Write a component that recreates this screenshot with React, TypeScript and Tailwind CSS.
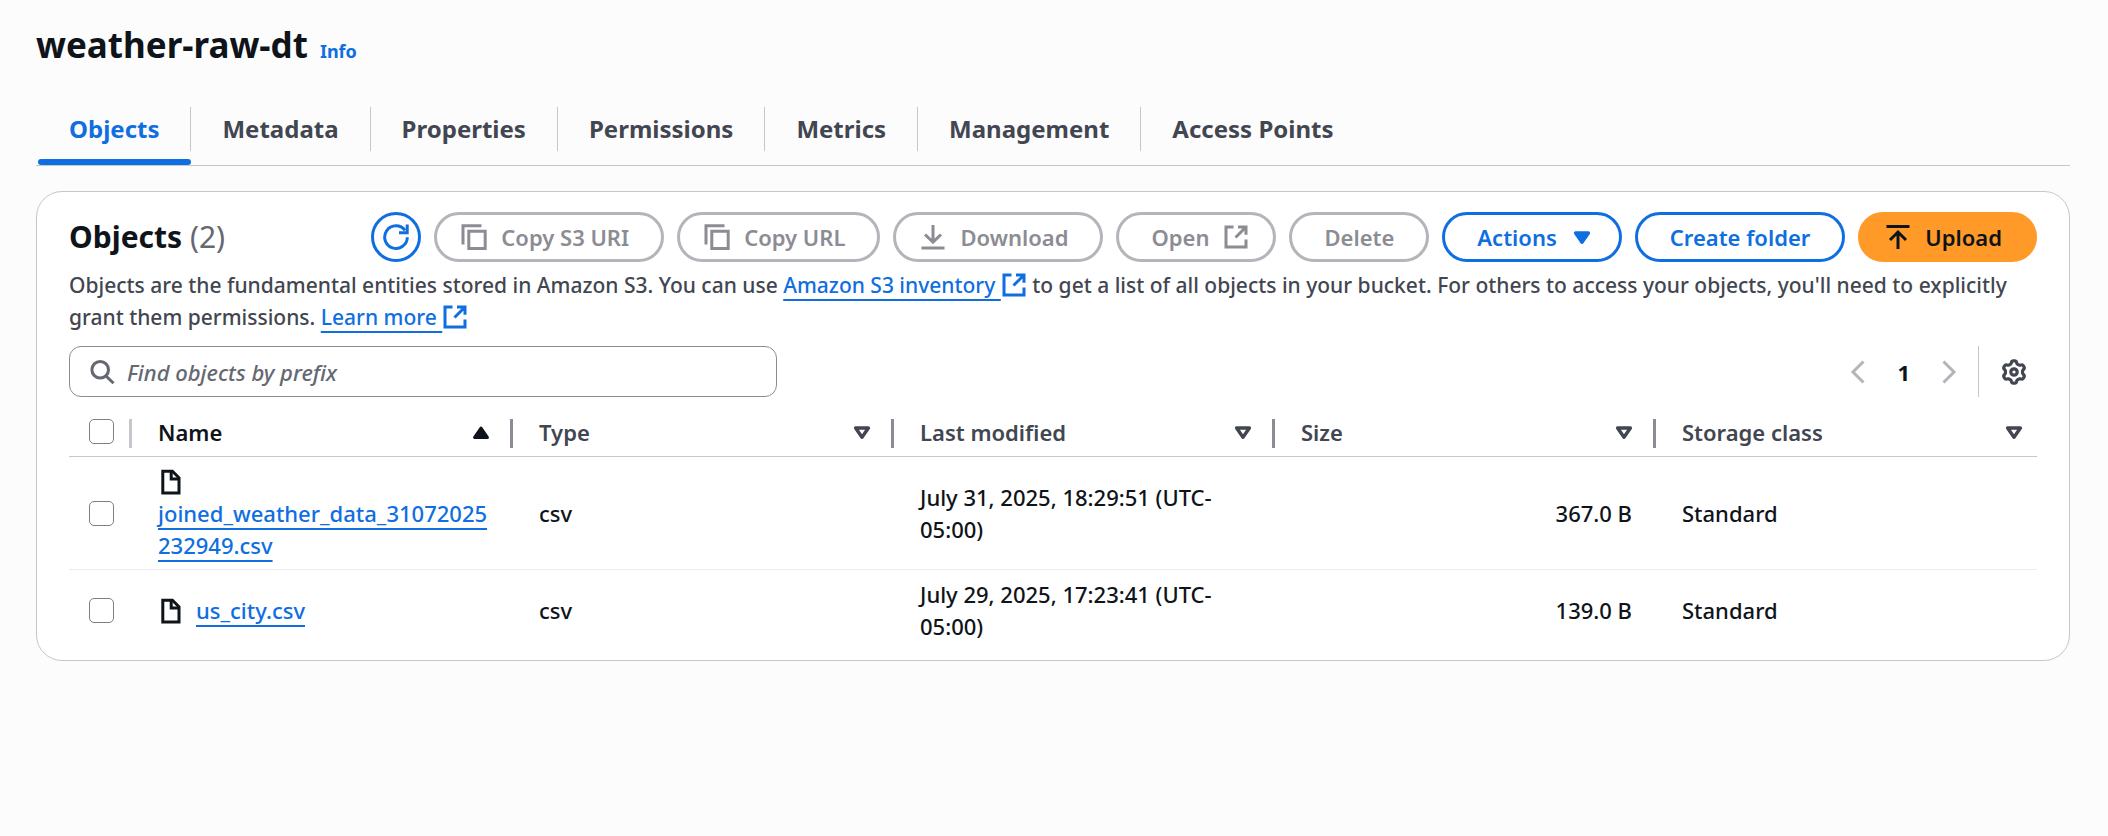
import type { ReactNode } from "react";

function Svg({ children, size = "size-[26px]", className = "", fill = "none" }: { children: ReactNode; size?: string; className?: string; fill?: string }) {
  return (
    <svg viewBox="0 0 26 26" className={`${size} shrink-0 ${className}`} fill={fill} stroke="currentColor" strokeWidth="3" aria-hidden="true">
      {children}
    </svg>
  );
}

const RefreshIcon = () => (
  <Svg>
    <path d="M24.3 13.2A11.3 11.3 0 1 1 22 6.3" />
    <path d="M16 8.8h8.2V0.5" />
  </Svg>
);
const CopyIcon = () => (
  <Svg>
    <path d="M20.5 1.8H2v18.7" />
    <path d="M7.8 7.3h16.4v17.2H7.8z" />
  </Svg>
);
const DownloadIcon = () => (
  <Svg>
    <path d="M1.5 24h23M13 1v17M5 10.5l8 7.7 8-7.7" />
  </Svg>
);
const UploadIcon = () => (
  <Svg>
    <path d="M1.5 2.5h23M13 25V8M5 16l8-8 8 8" />
  </Svg>
);
const ExternalIcon = ({ className = "" }: { className?: string }) => (
  <Svg className={className}>
    <path d="M10.5 3H3v20h20v-7.5M15 3h8v7.8M12.5 13.5L23 3" />
  </Svg>
);
const FileIcon = ({ className = "" }: { className?: string }) => (
  <Svg className={className}>
    <path d="M4.8 2.2h9.6l6.6 6.6v15.2H4.8z" />
    <path d="M13.2 2.2V10H21" />
  </Svg>
);
const SearchIcon = () => (
  <Svg className="text-[#656871]">
    <circle cx="11.2" cy="10.8" r="8.3" />
    <path d="M17 17l7.5 7.3" />
  </Svg>
);
const CaretDown = ({ filled = false }: { filled?: boolean }) => (
  <svg viewBox="0 0 26 26" className="size-[26px] shrink-0" fill={filled ? "currentColor" : "none"} stroke="currentColor" strokeWidth="3.4" strokeLinejoin="round" aria-hidden="true">
    <path d="M6.6 9h12.8L13 18.3z" />
  </svg>
);
const CaretUp = () => (
  <svg viewBox="0 0 26 26" className="size-[26px] shrink-0" fill="currentColor" stroke="currentColor" strokeWidth="3" strokeLinejoin="round" aria-hidden="true">
    <path d="M6.6 18.4h12.8L13 9z" />
  </svg>
);

const gearOutline =
  Array.from({ length: 96 }, (_, i) => {
    const a = (i / 96) * Math.PI * 2;
    const r = 9.9 + 1.4 * Math.tanh(2 * Math.cos(6 * a));
    return `${i ? "L" : "M"}${(13 + r * Math.sin(a)).toFixed(2)} ${(13 - r * Math.cos(a)).toFixed(2)}`;
  }).join("") + "Z";

const GearIcon = () => (
  <svg viewBox="0 0 26 26" className="size-[26px]" fill="none" stroke="currentColor" strokeWidth="3.2" strokeLinejoin="round" aria-hidden="true">
    <path d={gearOutline} />
    <circle cx="13" cy="13" r="3.2" />
  </svg>
);

const base = "flex h-[50px] items-center rounded-full border-[3px] text-[22px] font-semibold whitespace-nowrap";
const disabled = "border-[#b4b4bb] text-[#8c8c94]";
const normal = "border-[#0f6ee0] text-[#0f6ee0]";

const tabs = ["Objects", "Metadata", "Properties", "Permissions", "Metrics", "Management", "Access Points"];
const columns = ["Name", "Type", "Last modified", "Size", "Storage class"];
const rows = [
  { name: "joined_weather_data_31072025232949.csv", type: "csv", modified: "July 31, 2025, 18:29:51 (UTC-05:00)", size: "367.0 B", storage: "Standard" },
  { name: "us_city.csv", type: "csv", modified: "July 29, 2025, 17:23:41 (UTC-05:00)", size: "139.0 B", storage: "Standard" },
];

const link = "text-[#0f6ee0] underline decoration-2 underline-offset-[6px] [text-decoration-skip-ink:none]";

function Checkbox({ label }: { label: string }) {
  return <input type="checkbox" aria-label={label} className="block size-[25px] appearance-none rounded-[5px] border border-[#7f7f88] bg-white" />;
}

export default function App() {
  return (
    <main className="min-h-screen bg-[#fcfcfd] pt-5 pr-[38px] pl-9 font-['Noto_Sans',sans-serif] text-[22px] leading-8 font-medium text-[#0f141a]">
      <header className="flex items-baseline gap-3">
        <h1 className="text-[35px] leading-[50px] font-bold">weather-raw-dt</h1>
        <a href="#info" className="text-[18px] font-bold text-[#0f6ee0]">Info</a>
      </header>

      <nav className="mt-[37px] border-b border-[#c6c6cd]">
        <ul role="tablist" className="flex pl-0.5">
          {tabs.map((t, i) => (
            <li key={t} role="presentation" className="flex flex-col">
              <button
                role="tab"
                aria-selected={i === 0}
                className={`h-11 px-[31px] text-[24px] font-bold ${i === 0 ? "text-[#0f6ee0]" : "text-[#424650]"} ${i < tabs.length - 1 ? "border-r border-[#c6c6cd]" : ""}`}
              >
                {t}
              </button>
              <span className={`mt-2 h-1.5 rounded-[3px] ${i === 0 ? "bg-[#0f6ee0]" : ""}`} />
            </li>
          ))}
        </ul>
      </nav>

      <section className="mt-[25px] rounded-[26px] border border-[#c6c6cd] bg-white px-8 pt-5 pb-2.5">
        <div className="flex items-center justify-between">
          <h2 className="text-[30px] leading-10 font-bold">
            Objects <span className="font-normal text-[#656871]">(2)</span>
          </h2>
          <div className="flex gap-[13px]">
            <button aria-label="Refresh" className={`${base} ${normal} w-[50px] justify-center`}><RefreshIcon /></button>
            <button disabled className={`${base} ${disabled} gap-3.5 pr-8 pl-6`}><CopyIcon />Copy S3 URI</button>
            <button disabled className={`${base} ${disabled} gap-3.5 pr-8 pl-6`}><CopyIcon />Copy URL</button>
            <button disabled className={`${base} ${disabled} gap-3.5 pr-8 pl-6`}><DownloadIcon />Download</button>
            <button disabled className={`${base} ${disabled} gap-3.5 pr-6 pl-8`}>Open<ExternalIcon /></button>
            <button disabled className={`${base} ${disabled} px-8`}>Delete</button>
            <button className={`${base} ${normal} gap-3 pr-6 pl-8`}>Actions<CaretDown filled /></button>
            <button className={`${base} ${normal} px-8`}>Create folder</button>
            <button className={`${base} gap-3.5 border-[#ff9a29] bg-[#ff9a29] pr-8 pl-6 text-[#0f141a]`}><UploadIcon />Upload</button>
          </div>
        </div>

        <p className="mt-[7px] text-[21px] text-[#424650]">
          Objects are the fundamental entities stored in Amazon S3. You can use{" "}
          <a href="#inventory" className={link}>Amazon S3 inventory </a>
          <ExternalIcon className="inline-block align-[-5px] text-[#0f6ee0]" /> to get a list of all objects in your bucket. For others to access your objects, you'll need to explicitly grant them permissions.{" "}
          <a href="#learn" className={link}>Learn more </a>
          <ExternalIcon className="inline-block align-[-5px] text-[#0f6ee0]" />
        </p>

        <div className="mt-[13px] flex items-center justify-between">
          <label className="flex h-[51px] w-[36%] items-center gap-3 rounded-xl border border-[#8c8c94] pr-4 pl-[19px]">
            <SearchIcon />
            <input type="search" aria-label="Find objects by prefix" placeholder="Find objects by prefix" className="min-w-0 flex-1 bg-transparent outline-none placeholder:text-[#656871] placeholder:italic" />
          </label>
          <div className="flex items-center">
            <button aria-label="Previous page" className="text-[#b4b4bb]"><Svg><path d="M18.5 2.5L8 13l10.5 10.5" /></Svg></button>
            <span className="px-[26px] font-bold">1</span>
            <button aria-label="Next page" className="text-[#b4b4bb]"><Svg><path d="M7.5 2.5L18 13 7.5 23.5" /></Svg></button>
            <span className="ml-4 h-[51px] w-px bg-[#c6c6cd]" />
            <button aria-label="Preferences" className="mr-2.5 ml-[22px] text-[#424650]"><GearIcon /></button>
          </div>
        </div>

        <table className="w-full table-fixed border-collapse">
          <thead>
            <tr className="border-b border-[#c6c6cd]">
              <th className="w-[63px] pt-[22px] pb-2">
                <div className="flex h-[29px] items-start justify-between border-r-[3px] border-[#c6c6cd] pl-5"><Checkbox label="Select all" /></div>
              </th>
              {columns.map((c, i) => (
                <th key={c} scope="col" className={`pt-[22px] pb-2 text-left leading-[26px] font-semibold ${i === 0 ? "text-[#0f141a]" : "text-[#424650]"}`}>
                  <div className={`flex h-[29px] items-start justify-between pl-[26px] ${i < 4 ? "border-r-[3px] border-[#8c8c94] pr-4" : "pr-2.5"}`}>
                    {c}
                    {i === 0 ? <CaretUp /> : <CaretDown />}
                  </div>
                </th>
              ))}
            </tr>
          </thead>
          <tbody>
            {rows.map((r, i) => (
              <tr key={r.name} className={i === 0 ? "border-b border-[#ebebf0]" : ""}>
                <td className="pl-5"><Checkbox label={`Select ${r.name}`} /></td>
                <td className="py-2 pr-6 pl-[26px] wrap-break-word">
                  <FileIcon className="mr-3 inline-block align-[-5px]" />
                  <a href="#object" className={link}>{r.name}</a>
                </td>
                <td className="px-[26px] py-2">{r.type}</td>
                <td className="px-[26px] py-2">{r.modified}</td>
                <td className="py-2 pr-6 pl-[26px] text-right">{r.size}</td>
                <td className="px-[26px] py-2">{r.storage}</td>
              </tr>
            ))}
          </tbody>
        </table>
      </section>
    </main>
  );
}
